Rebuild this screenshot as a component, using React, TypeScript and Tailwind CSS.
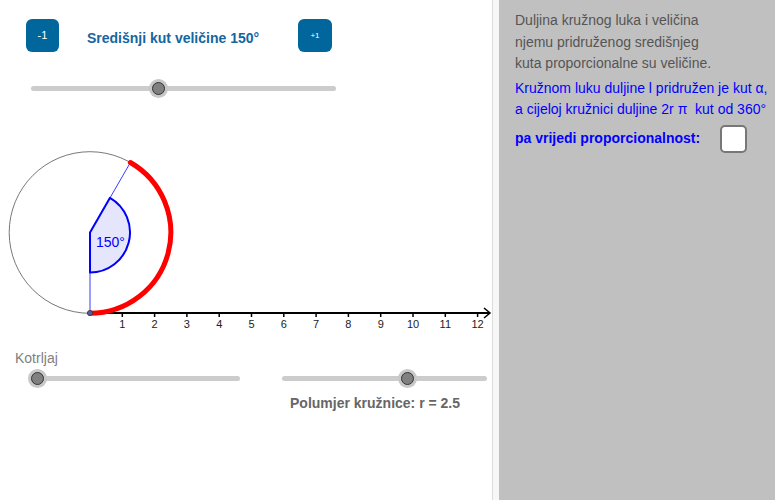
import React from 'react';

interface SliderProps {
  className: string;
  fraction: number;
}

// GeoGebra-style slider: grey track with a round knob
function Slider({ className, fraction }: SliderProps) {
  return (
    <div className={`relative h-[20px] ${className}`}>
      <div className="absolute left-0 right-0 top-[8px] h-[5px] rounded-full bg-[#cccccc]" />
      <div
        className="absolute top-[1px] w-[19px] h-[19px] -ml-[9.5px] rounded-full bg-[#c8c8c8] flex items-center justify-center"
        style={{ left: `${fraction * 100}%` }}
      >
        <div className="w-[13px] h-[13px] rounded-full bg-[#808080] border border-[#333]" />
      </div>
    </div>
  );
}

const CX = 90;
const CY = 232.5;
const R = 80.8;
const UNIT = 32.3;

function Drawing() {
  const endX = CX + R * Math.cos(Math.PI / 3);
  const endY = CY - R * Math.sin(Math.PI / 3);
  const sx = CX + 40 * Math.cos(Math.PI / 3);
  const sy = CY - 40 * Math.sin(Math.PI / 3);
  const ticks = Array.from({ length: 12 }, (_, i) => i + 1);

  return (
    <svg width="492" height="200" viewBox="0 140 492 200" className="mt-[42px] block">
      <circle cx={CX} cy={CY} r={R} fill="none" stroke="#555" strokeWidth="0.8" />
      <line x1={CX} y1={CY} x2={CX} y2={CY + R} stroke="#3b3bff" strokeWidth="1" />
      <line x1={CX} y1={CY} x2={endX} y2={endY} stroke="#3b3bff" strokeWidth="1" />
      <path
        d={`M${CX},${CY} L${CX},${CY + 40} A40,40 0 0 0 ${sx},${sy} Z`}
        fill="#e5e5fb"
        stroke="#0000ff"
        strokeWidth="2"
        strokeLinejoin="round"
      />
      <text x="96" y="246.5" fontSize="14" fill="#0000ff" fontFamily="Liberation Sans, Arial, sans-serif">
        150°
      </text>
      {/* x axis */}
      <line x1={CX} y1="313" x2="489" y2="313" stroke="#000" strokeWidth="2" />
      <polyline points="484,308 490,313 484,318" fill="none" stroke="#000" strokeWidth="1.5" />
      {ticks.map((n) => (
        <g key={n}>
          <line x1={CX + UNIT * n} y1="313" x2={CX + UNIT * n} y2="317" stroke="#000" strokeWidth="1.5" />
          <text
            x={CX + UNIT * n}
            y="327.5"
            fontSize="11"
            textAnchor="middle"
            fill="#222"
            fontFamily="Liberation Sans, Arial, sans-serif"
          >
            {n}
          </text>
        </g>
      ))}
      <path
        d={`M${CX},${CY + R} A${R},${R} 0 0 0 ${endX},${endY}`}
        fill="none"
        stroke="#ff0000"
        strokeWidth="5"
        strokeLinecap="round"
      />
      <circle cx={CX} cy="313" r="2.6" fill="#5a5a9a" stroke="#333" strokeWidth="0.8" />
    </svg>
  );
}

export default function App() {
  return (
    <div className="flex w-[775px] h-[500px] bg-white overflow-hidden font-['Liberation_Sans',Arial,sans-serif]">
      {/* Left: graphics */}
      <div className="flex flex-col w-[492px] shrink-0">
        <div className="flex items-center mt-[19px] h-[33px]">
          <button className="ml-[26px] w-[33px] h-[33px] rounded-[6px] bg-[#00669b] text-white text-[11px] leading-none">
            -1
          </button>
          <div className="ml-[28px] w-[211px] pt-[6px] text-[14px] font-bold text-[#15669f]">
            Središnji kut veličine 150°
          </div>
          <button className="w-[34px] h-[33px] rounded-[6px] bg-[#00669b] text-white text-[8px] leading-none">
            +1
          </button>
        </div>
        <Slider className="mt-[26px] ml-[31px] w-[305px]" fraction={150 / 360} />
        <Drawing />
        <div className="mt-[10px] pl-[15px] text-[14px] leading-[16px] text-[#808080]">Kotrljaj</div>
        <div className="flex mt-[2px]">
          <Slider className="ml-[37px] w-[203px]" fraction={0} />
          <Slider className="ml-[42px] w-[205px]" fraction={0.613} />
        </div>
        <div className="mt-[7px] pl-[290px] text-[14px] leading-[16px] font-bold text-[#666]">
          Polumjer kružnice: r = 2.5
        </div>
      </div>

      {/* Divider */}
      <div className="w-px bg-[#dcdcdc] shrink-0" />
      <div className="w-[6px] bg-[#f7f7f7] shrink-0" />

      {/* Right: algebra / text panel */}
      <div className="flex-1 bg-[#c0c0c0] pl-[16px] pt-[10px] text-[14px]">
        <div className="leading-[21.5px] text-[#555]">
          <div>Duljina kružnog luka i veličina</div>
          <div>njemu pridruženog središnjeg</div>
          <div>kuta proporcionalne su veličine.</div>
        </div>
        <div className="mt-[3px] leading-[21px] text-[#0000ff] whitespace-nowrap">
          <div>Kružnom luku duljine l pridružen je kut α,</div>
          <div>a cijeloj kružnici duljine 2r π&nbsp; kut od 360°</div>
        </div>
        <div className="flex items-center h-[28px] mt-[5px]">
          <div className="w-[205px] font-bold text-[#0000ff]">pa vrijedi proporcionalnost:</div>
          <div className="w-[27px] h-[28px] bg-white border-2 border-[#777] rounded-[5px]" />
        </div>
      </div>
    </div>
  );
}
